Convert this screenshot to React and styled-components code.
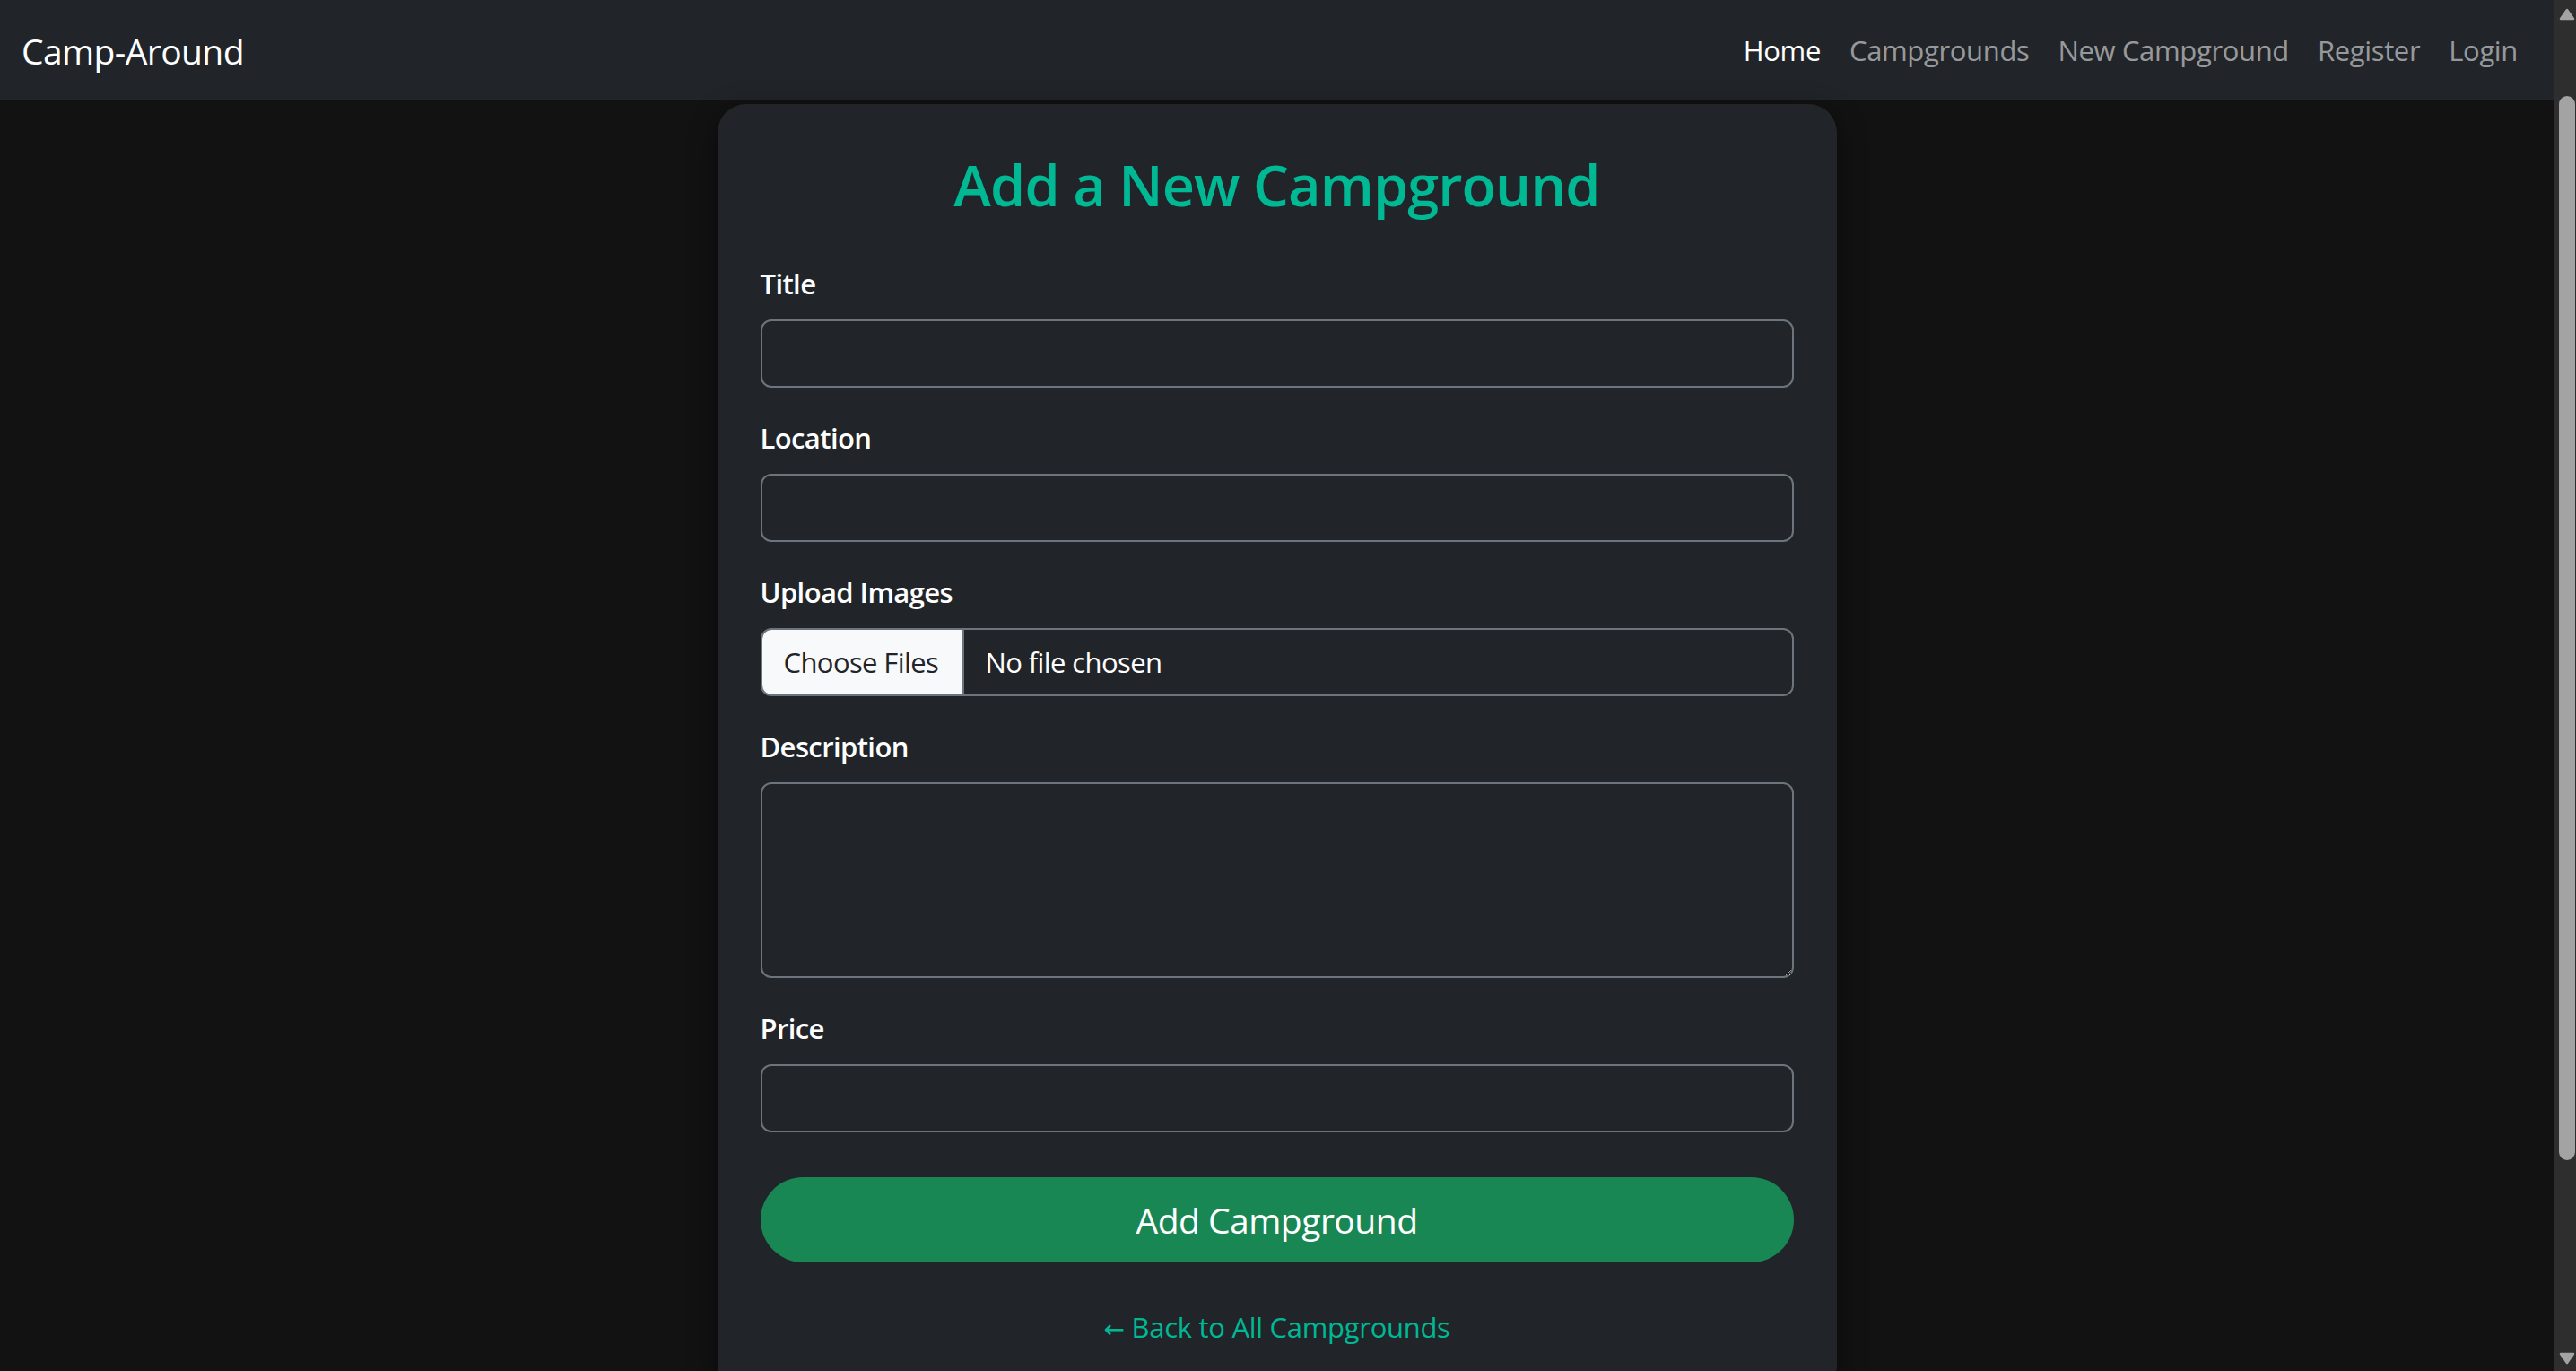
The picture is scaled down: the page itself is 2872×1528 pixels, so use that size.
import React from "react";
import styled, { createGlobalStyle } from "styled-components";

const GlobalStyle = createGlobalStyle`
  html, body {
    margin: 0;
    padding: 0;
    background-color: #121212;
    font-family: "Open Sans", "Noto Sans", sans-serif;
    color: #dee2e6;
  }
  * {
    box-sizing: border-box;
  }
`

const Shell = styled.div`
  display: flex;
  align-items: flex-start;
`

const Page = styled.div`
  flex: 1;
  min-width: 0;
`

// stands in for the browser's page scrollbar
const ScrollRail = styled.div`
  position: sticky;
  top: 0;
  flex: 0 0 25px;
  height: 100vh;
  background-color: #2e2e2e;
  display: flex;
  flex-direction: column;
  align-items: flex-end;
  padding: 9px 1px 7px 0;
`

const ScrollThumb = styled.div`
  width: 18px;
  height: 1186px;
  margin-top: 84px;
  border-radius: 9px;
  background-color: #a3a3a3;
`

const RailSpacer = styled.div`
  flex: 1;
`

const Navbar = styled.nav`
  height: 112px;
  background-color: #212529;
  display: flex;
  align-items: center;
  justify-content: space-between;
  padding: 0 24px;
`

const Brand = styled.a`
  font-size: 39px;
  color: #fff;
  text-decoration: none;
  letter-spacing: -0.6px;
`

const NavList = styled.ul`
  display: flex;
  list-style: none;
  margin: 0;
  padding: 0;
`

const NavLink = styled.a`
  display: block;
  padding: 16px;
  font-size: 31px;
  letter-spacing: -0.35px;
  line-height: 48px;
  text-decoration: none;
  color: ${(p) => (p.$active ? "#fff" : "rgba(255, 255, 255, 0.55)")};
`

const Main = styled.main`
  display: flex;
  justify-content: center;
  padding: 4px 0 48px;
`

const Card = styled.div`
  width: 1248px;
  background-color: #212529;
  border-radius: 32px;
  padding: 52px 48px 48px;
  box-shadow: 0 8px 32px rgba(0, 0, 0, 0.45);
`

const Heading = styled.h1`
  margin: 0 0 48px;
  text-align: center;
  color: #00b894;
  font-size: 63px;
  font-weight: 600;
  letter-spacing: -0.9px;
  line-height: 1.2;
`

const Field = styled.div`
  margin-bottom: 32px;
`

const Label = styled.label`
  display: block;
  margin-bottom: 16px;
  font-size: 31px;
  font-weight: 600;
  letter-spacing: -0.6px;
  line-height: 48px;
  color: #fff;
`

const Input = styled.input`
  display: block;
  width: 100%;
  height: 76px;
  background-color: #212529;
  border: 2px solid #6c757d;
  border-radius: 12px;
  padding: 12px 24px;
  font-family: inherit;
  font-size: 32px;
  color: #fff;
  outline: none;
`

const TextArea = styled.textarea`
  display: block;
  width: 100%;
  height: 218px;
  background-color: #212529;
  border: 2px solid #6c757d;
  border-radius: 12px;
  padding: 12px 24px;
  font-family: inherit;
  font-size: 32px;
  color: #fff;
  outline: none;
  resize: vertical;
  color-scheme: dark;
`

const FileBox = styled.div`
  display: flex;
  align-items: stretch;
  height: 76px;
  border: 2px solid #6c757d;
  border-radius: 12px;
  overflow: hidden;
`

const FileButton = styled.span`
  display: flex;
  align-items: center;
  padding: 0 24px;
  width: 225px;
  background-color: #f8f9fa;
  color: #212529;
  border-right: 2px solid #6c757d;
  font-size: 31px;
  letter-spacing: -0.6px;
`

const FileName = styled.span`
  display: flex;
  align-items: center;
  padding: 0 24px;
  color: #fff;
  font-size: 31px;
  letter-spacing: -0.6px;
`

const SubmitButton = styled.button`
  display: block;
  width: 100%;
  height: 95px;
  margin-top: 50px;
  border: none;
  border-radius: 48px;
  background-color: #198754;
  color: #fff;
  font-family: inherit;
  font-size: 39px;
  letter-spacing: -0.5px;
  cursor: pointer;
`

const BackLink = styled.a`
  display: block;
  margin-top: 48px;
  text-align: center;
  color: #00b894;
  font-size: 31px;
  letter-spacing: -0.3px;
  line-height: 48px;
  text-decoration: none;
`

const ArrowGlyph = styled.span`
  font-family: "DejaVu Sans", sans-serif;
  font-size: 28px;
  margin-right: 8px;
`

const links = [
  { label: "Home", active: true },
  { label: "Campgrounds" },
  { label: "New Campground" },
  { label: "Register" },
  { label: "Login" },
]

const Arrow = ({ down }) => (
  <svg width="18" height="14" viewBox="0 0 18 14">
    <path
      d={down ? "M2 2 L16 2 L9 12 Z" : "M2 12 L16 12 L9 2 Z"}
      fill="#a3a3a3"
      stroke="#a3a3a3"
      strokeWidth="2.5"
      strokeLinejoin="round"
    />
  </svg>
)

const App = () => (
  <Shell>
    <GlobalStyle />
    <Page>
      <Navbar>
        <Brand href="#">Camp-Around</Brand>
        <NavList>
          {links.map((l) => (
            <li key={l.label}>
              <NavLink href="#" $active={l.active}>
                {l.label}
              </NavLink>
            </li>
          ))}
        </NavList>
      </Navbar>
      <Main>
        <Card>
          <Heading>Add a New Campground</Heading>
          <form onSubmit={(e) => e.preventDefault()}>
            <Field>
              <Label htmlFor="title">Title</Label>
              <Input id="title" type="text" />
            </Field>
            <Field>
              <Label htmlFor="location">Location</Label>
              <Input id="location" type="text" />
            </Field>
            <Field>
              <Label>Upload Images</Label>
              <FileBox>
                <FileButton>Choose Files</FileButton>
                <FileName>No file chosen</FileName>
              </FileBox>
            </Field>
            <Field>
              <Label htmlFor="description">Description</Label>
              <TextArea id="description" />
            </Field>
            <Field>
              <Label htmlFor="price">Price</Label>
              <Input id="price" type="text" />
            </Field>
            <SubmitButton type="submit">Add Campground</SubmitButton>
          </form>
          <BackLink href="#">
            <ArrowGlyph>←</ArrowGlyph>Back to All Campgrounds
          </BackLink>
        </Card>
      </Main>
    </Page>
    <ScrollRail>
      <Arrow />
      <ScrollThumb />
      <RailSpacer />
      <Arrow down />
    </ScrollRail>
  </Shell>
)

export default App
